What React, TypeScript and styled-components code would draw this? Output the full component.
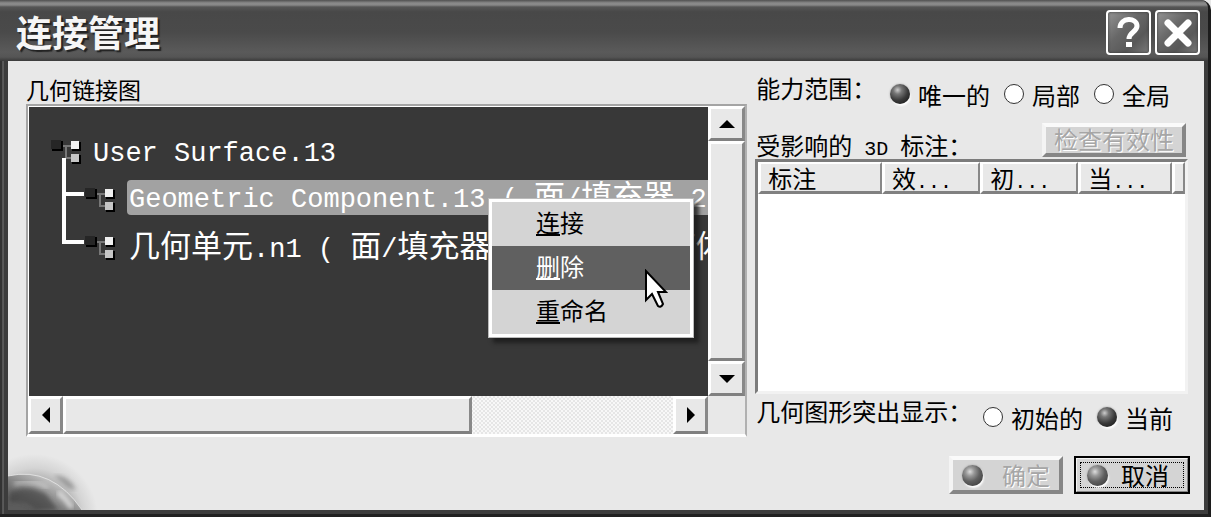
import React from "react";
import styled, { createGlobalStyle, css } from "styled-components";

const GlobalStyle = createGlobalStyle`
  *, *::before, *::after { box-sizing: border-box; }
  body {
    margin: 0;
    background: #e8e8e8;
    color: #000;
    font: 24px/30px "Noto Sans CJK SC", sans-serif;
  }
  button, input, table { font: inherit; color: inherit; }
`;

const raised = css`
  background: #e8e8e8;
  border-style: solid;
  border-width: 3px;
  border-color: #fff #888 #808080 #fff;
`;

const Dialog = styled.main`
  min-height: 100vh;
  display: flex;
  flex-direction: column;
  background: linear-gradient(90deg, #333 0, #333 2px, #777 3px, #3c3c3c 4px, #3c3c3c 100%);
  border-bottom: 3px solid #202020;
  border-right: 3px solid #1c1c1c;
  border-top-right-radius: 10px;
`;

const TitleBar = styled.header`
  flex: none;
  height: 61px;
  padding: 4px 8px 0 16px;
  display: flex;
  align-items: center;
  justify-content: space-between;
  border-top-right-radius: 8px;
  background: linear-gradient(
    #505050 0, #8a8a8a 3px, #888 5px, #555 7px, #484848 12px,
    #4a4a4a 32px, #5a5a5a 52px, #555 57px, #3a3a3a 61px
  );
`;

const Title = styled.h1`
  margin: 0 0 4px;
  font-size: 36px;
  line-height: 40px;
  font-weight: 700;
  color: #f6f6f6;
  text-shadow: 2px 2px 1px #222;
`;

const TitleButtons = styled.div`
  display: flex;
  gap: 4px;
`;

const TitleButton = styled.button`
  width: 45px;
  height: 45px;
  padding: 0;
  display: grid;
  place-items: center;
  border: 2px solid #fff;
  border-radius: 4px;
  background: linear-gradient(135deg, #949494, #686868 40%, #585858 70%, #7a7a7a);
  box-shadow: inset 0 0 3px #333;
`;

const Body = styled.div`
  flex: 1;
  margin: 0 4px 4px 8px;
  display: flex;
  flex-direction: column;
  background: #e8e8e8;
`;

const Columns = styled.div`
  display: grid;
  grid-template-columns: minmax(0, 5fr) minmax(0, 3fr);
  gap: 8px;
  padding: 13px 16px 0 18px;
`;

const Column = styled.section`
  display: flex;
  flex-direction: column;
`;

const Caption = styled.h2<{ $small?: boolean }>`
  margin: 0;
  font-size: ${(p) => (p.$small ? "23px" : "24px")};
  line-height: ${(p) => (p.$small ? "30px" : "28px")};
  font-weight: 400;
  white-space: nowrap;
`;

const Half = styled.span`
  font-family: "Liberation Mono", monospace;
  font-size: 20px;
  line-height: 0;
`;

const ScrollPane = styled.div`
  display: grid;
  grid-template-columns: minmax(0, 1fr) 37px;
  grid-template-rows: minmax(290px, 1fr) 38px;
  border-style: solid;
  border-width: 2px 2px 3px 2px;
  border-color: #a4a4a4 #b0b0b0 #fff #a4a4a4;
  background: #e8e8e8;
`;

const Viewport = styled.div`
  position: relative;
  border: solid #fff;
  border-width: 1px 0 0 1px;
  background: #383838;
`;

const Clip = styled.div`
  height: 100%;
  overflow: hidden;
  padding: 21px 0 0 21px;
`;

const List = styled.ul<{ $nested?: boolean }>`
  list-style: none;
  margin: 0;
  padding: 0 0 0 ${(p) => (p.$nested ? "12px" : "0")};
`;

const Node = styled.div`
  height: 48px;
  display: flex;
  align-items: center;
  white-space: nowrap;
`;

const Branch = styled.span`
  flex: none;
  align-self: stretch;
  width: 22px;
  display: flex;
  flex-direction: column;
`;

const Elbow = styled.span`
  height: 38px;
  flex: none;
  margin-top: -18px;
  border: solid #fff;
  border-width: 0 0 4px 4px;
`;

const Stem = styled.span`
  flex: 1;
  border-left: 4px solid #fff;
`;

const NodeText = styled.span<{ $selected?: boolean; $root?: boolean }>`
  flex: ${(p) => (p.$selected ? "1 0 auto" : "none")};
  height: 35px;
  margin-left: ${(p) => (p.$root ? "8px" : "10px")};
  margin-bottom: ${(p) => (p.$selected ? "6px" : "2px")};
  padding-left: 2px;
  border-radius: 4px 0 0 4px;
  background: ${(p) => (p.$selected ? "#a2a2a2" : "transparent")};
  color: #fff;
  font-family: "Liberation Mono", monospace;
  font-size: 27px;
  line-height: 40px;
  white-space: pre;
`;

const Wide = styled.span`
  font-family: "Noto Sans CJK SC", sans-serif;
  font-size: 31px;
  font-weight: 400;
  line-height: 0;
`;

const VScroll = styled.div`
  display: flex;
  flex-direction: column;
`;

const HScroll = styled.div`
  display: flex;
`;

const Track = styled.div`
  flex: 1;
  display: flex;
  background: repeating-conic-gradient(#e6e6e6 0 25%, #f8f8f8 0 50%) 0 0 / 4px 4px;
`;

const Thumb = styled.div<{ $size: string }>`
  ${raised}
  flex: 0 0 ${(p) => p.$size};
`;

const Arrow = styled.button`
  ${raised}
  flex: 0 0 35px;
  padding: 0;
  display: grid;
  place-items: center;
`;

const Corner = styled.div`
  background: #e8e8e8;
`;

const Menu = styled.div`
  position: absolute;
  left: 459px;
  top: 91px;
  width: 206px;
  padding: 3px;
  border: 1px solid #bbb;
  background: #fff;
  box-shadow: 5px 5px 4px #1a1a1acc;
`;

const MenuItem = styled.button<{ $active?: boolean }>`
  display: block;
  width: 100%;
  height: 44px;
  padding: 0 0 4px 44px;
  border: 0;
  text-align: left;
  line-height: 30px;
  background: ${(p) => (p.$active ? "#606060" : "#d4d4d4")};
  color: ${(p) => (p.$active ? "#fff" : "#000")};
`;

const Mnemonic = styled.span`
  text-decoration: underline;
  text-decoration-thickness: 2px;
  text-underline-offset: 2px;
`;

const Pointer = styled.svg`
  position: absolute;
  left: 156px;
  top: 70px;
`;

const OptionRow = styled.div<{ $bottom?: boolean }>`
  height: ${(p) => (p.$bottom ? "43px" : "48px")};
  padding: ${(p) => (p.$bottom ? "3px 15px 0 1px" : "0 18px 0 1px")};
  display: flex;
  justify-content: space-between;
  align-items: flex-start;
`;

const Options = styled.div`
  display: flex;
  gap: 14px;
  padding-top: 6px;
`;

const Option = styled.label`
  display: flex;
  align-items: center;
  gap: 8px;
  white-space: nowrap;
`;

const ball = css`
  border: 0;
  background: radial-gradient(circle at 38% 30%, #ccc 0, #777 22%, #3a3a3a 55%, #222 80%, #555 100%);
  box-shadow: 1px 2px 2px #fff, 0 0 2px #999;
`;

const Radio = styled.input`
  appearance: none;
  flex: none;
  width: 20px;
  height: 20px;
  margin: 0 0 2px;
  border: 1px solid #333;
  border-radius: 50%;
  background: #fff;
  &:checked { ${ball} }
`;

const Ball = styled.span`
  width: 21px;
  height: 21px;
  border-radius: 50%;
  ${ball}
  background: radial-gradient(circle at 38% 32%, #ddd 0, #999 22%, #606060 50%, #444 80%, #777 100%);
`;

const TableHead = styled.div`
  height: 37px;
  display: flex;
  justify-content: space-between;
  align-items: flex-end;
  padding: 0 2px 0 1px;
`;

const PushButton = styled.button`
  border-style: solid;
  border-width: 4px;
  border-color: #fafafa #868686 #868686 #f4f4f4;
  background: #d4d4d4;
  display: flex;
  align-items: center;
  justify-content: center;
  padding: 0;
  white-space: nowrap;
  &:disabled {
    color: #a6a6a6;
    text-shadow: 1px 1px 0 #fff;
  }
`;

const CheckButton = styled(PushButton)`
  width: 144px;
  height: 34px;
  margin-bottom: 2px;
  padding-bottom: 2px;
  line-height: 24px;
`;

const ActionButton = styled(PushButton)`
  width: 114px;
  height: 38px;
  gap: 19px;
`;

const CancelButton = styled(ActionButton)`
  width: 116px;
  gap: 0;
  border-color: #f4f4f4 #868686 #868686 #f4f4f4;
  border-width: 3px;
  outline: 2px solid #000;
  outline-offset: -2px;
  padding: 2px;
`;

const FocusRing = styled.span`
  width: 104px;
  height: 26px;
  padding-right: 8px;
  display: flex;
  align-items: center;
  justify-content: center;
  gap: 13px;
  border: 1px dotted #000;
`;

const TableFrame = styled.div`
  flex: 1;
  border-style: solid;
  border-width: 3px;
  border-color: #7c7c7c #f2f2f2 #f2f2f2 #7c7c7c;
  background: #fff;
`;

const Table = styled.table`
  width: 100%;
  table-layout: fixed;
  border-collapse: separate;
  border-spacing: 0;
`;

const Th = styled.th<{ $width?: string }>`
  width: ${(p) => p.$width ?? "auto"};
  height: 32px;
  padding: 0 0 0 7px;
  white-space: nowrap;
  text-align: left;
  font-weight: 400;
  line-height: 27px;
  ${raised}
  border-width: 2px 2px 3px 3px;
`;

const Footer = styled.footer`
  flex: 1;
  display: flex;
  align-items: flex-end;
  justify-content: space-between;
  min-height: 72px;
`;

const Actions = styled.div`
  align-self: flex-start;
  display: flex;
  gap: 11px;
  padding: 19px 14px 15px 0;
`;

const CJK = /([\u3400-\u9fff]+)/;

function MixedText({ text }: { text: string }) {
  return (
    <>
      {text.split(CJK).map((run, i) => (CJK.test(run) ? <Wide key={i}>{run}</Wide> : run))}
    </>
  );
}

const NodeIcon = styled.svg`
  flex: none;
`;

function LinkIcon() {
  return (
    <NodeIcon width="33" height="26" viewBox="0 0 33 26" aria-hidden="true">
      <path d="M12 7H22M16 7V19H22" fill="none" stroke="#777" strokeWidth="2" />
      <path d="M2 2H13V12H2Z" fill="#000" />
      <path d="M1 1H11V10H1Z" fill="#262626" />
      <path d="M22 3H31V12H22ZM22 16H31V25H22Z" fill="#000" />
      <path d="M21 2H29V10H21Z" fill="#f0f0f0" />
      <path d="M21 15H29V23H21Z" fill="#c6c6c6" />
    </NodeIcon>
  );
}

const arrowPaths = {
  up: "M1 13L9 5L17 13Z",
  down: "M1 5L9 13L17 5Z",
  left: "M13 1L5 9L13 17Z",
  right: "M5 1L13 9L5 17Z",
};

function ScrollArrow({ dir, label }: { dir: keyof typeof arrowPaths; label: string }) {
  return (
    <Arrow type="button" aria-label={label}>
      <svg width="18" height="18" viewBox="0 0 18 18" aria-hidden="true">
        <path d={arrowPaths[dir]} />
      </svg>
    </Arrow>
  );
}

function Globe() {
  return (
    <svg width="90" height="68" viewBox="0 0 90 68" aria-hidden="true">
      <defs>
        <radialGradient id="halo" gradientUnits="userSpaceOnUse" cx="26" cy="76" r="64">
          <stop offset="0.6" stopColor="#b0b0b0" />
          <stop offset="0.78" stopColor="#d4d4d4" />
          <stop offset="1" stopColor="#e8e8e8" />
        </radialGradient>
        <linearGradient id="planet" gradientUnits="userSpaceOnUse" x1="44" y1="30" x2="24" y2="68">
          <stop offset="0" stopColor="#e0e0e0" />
          <stop offset="0.3" stopColor="#b0b0b0" />
          <stop offset="0.65" stopColor="#808080" />
          <stop offset="1" stopColor="#5c5c5c" />
        </linearGradient>
        <filter id="soft"><feGaussianBlur stdDeviation="2" /></filter>
      </defs>
      <rect width="90" height="68" fill="url(#halo)" />
      <path d="M46 33Q62 34 68 48L60 46Z" fill="#777" opacity="0.6" filter="url(#soft)" />
      <path d="M0 34Q44 24 74 68H0Z" fill="url(#planet)" />
      <path d="M2 50Q22 42 38 52L50 68H28Q16 58 2 60Z" fill="#3d3d3d" opacity="0.6" filter="url(#soft)" />
      <path d="M6 42Q24 36 40 46" fill="none" stroke="#eee" strokeWidth="3" opacity="0.5" filter="url(#soft)" />
      <path d="M50 50L58 58L64 66" fill="none" stroke="#eee" strokeWidth="5" opacity="0.7" filter="url(#soft)" />
      <path d="M0 34Q44 24 74 68" fill="none" stroke="#f0f0f0" strokeWidth="1" opacity="0.7" />
    </svg>
  );
}

const children = [
  { text: "Geometric Component.13 ( 面/填充器.2", selected: true },
  { text: "几何单元.n1 ( 面/填充器.21, 零件几何体", selected: false },
];

const menuItems = ["连接", "删除", "重命名"];
const columns = [
  { name: "标注", dots: false, width: "29%" },
  { name: "效", dots: true, width: "23%" },
  { name: "初", dots: true, width: "23%" },
  { name: "当", dots: true, width: "22%" },
];

function RadioGroup({ name, label, options, value }: {
  name: string; label: string; options: string[]; value: string;
}) {
  return (
    <Options role="radiogroup" aria-label={label}>
      {options.map((o) => (
        <Option key={o}>
          <Radio type="radio" name={name} defaultChecked={o === value} />
          {o}
        </Option>
      ))}
    </Options>
  );
}

export default function App() {
  return (
    <>
      <GlobalStyle />
      <Dialog>
        <TitleBar>
          <Title>连接管理</Title>
          <TitleButtons>
            <TitleButton type="button" aria-label="帮助">
              <svg width="33" height="33" viewBox="0 0 33 33" fill="none" stroke="#fff" strokeWidth="5" aria-hidden="true">
                <path d="M8 12C8 1 25 1 25 10C25 16 17 16 17 23" />
                <path d="M17 26V31" strokeWidth="6" />
              </svg>
            </TitleButton>
            <TitleButton type="button" aria-label="关闭">
              <svg width="33" height="33" viewBox="0 0 33 33" stroke="#fff" strokeWidth="7" strokeLinecap="round" aria-hidden="true">
                <path d="M7 7L27 27M27 7L7 27" />
              </svg>
            </TitleButton>
          </TitleButtons>
        </TitleBar>
        <Body>
          <Columns>
            <Column>
              <Caption $small>几何链接图</Caption>
              <ScrollPane>
                <Viewport>
                  <Clip>
                    <List>
                      <li>
                        <Node>
                          <LinkIcon />
                          <NodeText $root>User Surface.13</NodeText>
                        </Node>
                        <List $nested>
                          {children.map((c, i) => (
                            <li key={c.text}>
                              <Node>
                                <Branch>
                                  <Elbow />
                                  {i < children.length - 1 && <Stem />}
                                </Branch>
                                <LinkIcon />
                                <NodeText $selected={c.selected}>
                                  <MixedText text={c.text} />
                                </NodeText>
                              </Node>
                            </li>
                          ))}
                        </List>
                      </li>
                    </List>
                  </Clip>
                  <Menu role="menu">
                    {menuItems.map((m, i) => (
                      <MenuItem key={m} type="button" role="menuitem" $active={i === 1}>
                        <Mnemonic>{m[0]}</Mnemonic>
                        {m.slice(1)}
                      </MenuItem>
                    ))}
                    <Pointer width="23" height="40" viewBox="0 0 23 40" aria-hidden="true">
                      <path
                        d="M1 2V31L7 25L13 37Q16 39 18 35L13 23H21Z"
                        fill="#fff" stroke="#000" strokeWidth="2"
                      />
                    </Pointer>
                  </Menu>
                </Viewport>
                <VScroll>
                  <ScrollArrow dir="up" label="向上滚动" />
                  <Thumb $size="calc(100% - 70px)" />
                  <ScrollArrow dir="down" label="向下滚动" />
                </VScroll>
                <HScroll>
                  <ScrollArrow dir="left" label="向左滚动" />
                  <Track>
                    <Thumb $size="67%" />
                  </Track>
                  <ScrollArrow dir="right" label="向右滚动" />
                </HScroll>
                <Corner />
              </ScrollPane>
            </Column>
            <Column>
              <OptionRow>
                <Caption>能力范围：</Caption>
                <RadioGroup name="scope" label="能力范围" options={["唯一的", "局部", "全局"]} value="唯一的" />
              </OptionRow>
              <TableHead>
                <Caption>
                  受影响的<Half> 3D </Half>标注：
                </Caption>
                <CheckButton type="button" disabled>检查有效性</CheckButton>
              </TableHead>
              <TableFrame>
                <Table>
                  <thead>
                    <tr>
                      {columns.map((c) => (
                        <Th key={c.name} $width={c.width} scope="col">
                          {c.name}
                          {c.dots && <Half>...</Half>}
                        </Th>
                      ))}
                      <Th as="td" />
                    </tr>
                  </thead>
                </Table>
              </TableFrame>
              <OptionRow $bottom>
                <Caption>几何图形突出显示：</Caption>
                <RadioGroup name="highlight" label="几何图形突出显示" options={["初始的", "当前"]} value="当前" />
              </OptionRow>
            </Column>
          </Columns>
          <Footer>
            <Globe />
            <Actions>
              <ActionButton type="button" disabled>
                <Ball />
                确定
              </ActionButton>
              <CancelButton type="button">
                <FocusRing>
                  <Ball />
                  取消
                </FocusRing>
              </CancelButton>
            </Actions>
          </Footer>
        </Body>
      </Dialog>
    </>
  );
}
